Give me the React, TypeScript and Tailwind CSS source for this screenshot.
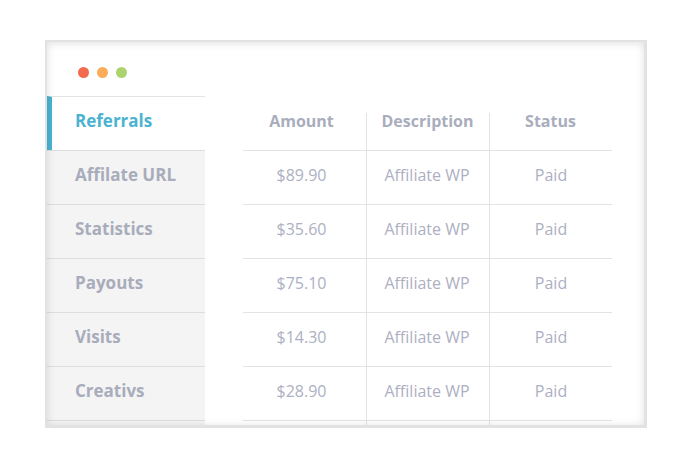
import React from "react";

const menu = ["Referrals", "Affilate URL", "Statistics", "Payouts", "Visits", "Creativs"];

const rows = [
    { amount: "$89.90", desc: "Affiliate WP", status: "Paid" },
    { amount: "$35.60", desc: "Affiliate WP", status: "Paid" },
    { amount: "$75.10", desc: "Affiliate WP", status: "Paid" },
    { amount: "$14.30", desc: "Affiliate WP", status: "Paid" },
    { amount: "$28.90", desc: "Affiliate WP", status: "Paid" },
    { amount: "", desc: "", status: "" },
];

const App: React.FC = () => {
    return (
        <div className="w-[691px] h-[476px] bg-white pt-[40px] pl-[45px] font-['Open_Sans',sans-serif]">
            <div className="relative w-[602px] h-[388px] border-2 border-b-[3px] border-r-[3px] border-[#e2e2e2] bg-white overflow-hidden flex">
                <div className="w-[158px] shrink-0 flex flex-col">
                    <div className="h-[54px] flex items-center gap-[8px] pl-[31px] pt-[6px] shrink-0">
                        <div className="size-[11px] rounded-full bg-[#f26b4e]"></div>
                        <div className="size-[11px] rounded-full bg-[#fbad5c]"></div>
                        <div className="size-[11px] rounded-full bg-[#abd46f]"></div>
                    </div>
                    <div className="flex-1 bg-[#f4f4f4]">
                        {menu.map((item, i) => (
                            <div
                                key={item}
                                className={
                                    i === 0
                                        ? "h-[54px] bg-white border-t border-[#e3e3e3] border-l-[5px] border-l-[#4bb3d0] flex items-center pl-[23px] pb-[5px] text-[17px] font-bold text-[#4bb3d0]"
                                        : "h-[54px] border-t border-[#dedede] flex items-center pl-[28px] pb-[5px] text-[17px] font-bold text-[#a8acbb]"
                                }
                            >
                                {item}
                            </div>
                        ))}
                        <div className="border-t border-[#dedede]"></div>
                    </div>
                </div>

                <div className="ml-[38px] w-[369px] pt-[54px] shrink-0">
                    <div className="grid grid-cols-3 h-[54px] text-[16px] font-bold text-[#a9adbc]">
                        <div className="flex items-center justify-center pr-[6px] pb-[5px]">Amount</div>
                        <div className="flex items-center justify-center relative pb-[5px]">
                            <div className="absolute left-0 top-[17px] bottom-0 border-l border-[#e3e3e3]"></div>
                            Description
                        </div>
                        <div className="flex items-center justify-center relative pb-[5px]">
                            <div className="absolute left-0 top-[17px] bottom-0 border-l border-[#e3e3e3]"></div>
                            Status
                        </div>
                    </div>
                    {rows.map((r, i) => (
                        <div key={i} className="grid grid-cols-3 h-[54px] border-t border-[#e3e3e3] text-[16px] text-[#adb0c2]">
                            <div className="flex items-center justify-center pr-[6px] pb-[5px]">{r.amount}</div>
                            <div className="flex items-center justify-center border-l border-[#e3e3e3] pb-[5px] pr-[2px]">{r.desc}</div>
                            <div className="flex items-center justify-center border-l border-[#e3e3e3] pb-[5px]">{r.status}</div>
                        </div>
                    ))}
                </div>

                <div className="pointer-events-none absolute inset-0 shadow-[inset_0_1px_8px_rgba(0,0,0,0.13)]"></div>
            </div>
        </div>
    );
};

export default App;
